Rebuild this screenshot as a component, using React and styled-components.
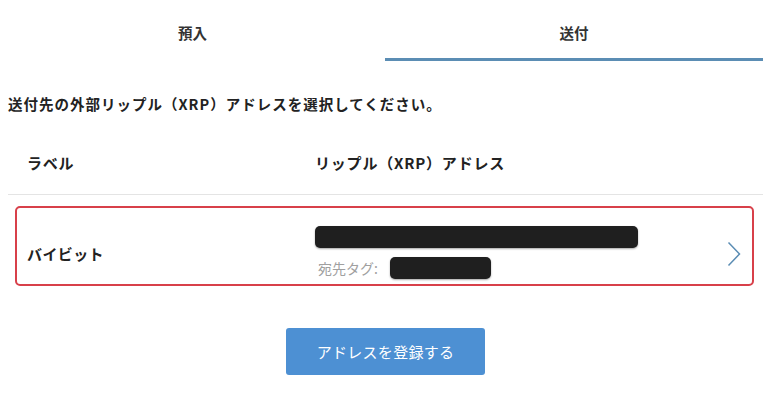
import styled, { createGlobalStyle } from 'styled-components';

const GlobalStyle = createGlobalStyle`
  body {
    margin: 0;
    background: #fff;
    font-family: "Noto Sans CJK JP", "Noto Sans", sans-serif;
    color: #333;
  }
`;

const Page = styled.div`
  width: 768px;
  height: 407px;
  overflow: hidden;
`;

const Tabs = styled.div`
  display: grid;
  grid-template-columns: 385px 378px;
`;

const Tab = styled.div`
  height: 61px;
  padding-top: 23px;
  box-sizing: border-box;
  text-align: center;
  font-size: 14.5px;
  font-weight: 700;
  line-height: 20px;
  color: #333;
  border-bottom: 3px solid ${(props) => (props.active ? '#5b8db4' : 'transparent')};
`;

const Lead = styled.p`
  margin: 33px 0 0 8px;
  font-size: 14.5px;
  font-weight: 700;
  line-height: 20px;
  letter-spacing: 1px;
  color: #222;
`;

const HeadRow = styled.div`
  display: grid;
  grid-template-columns: 307px 1fr;
  margin: 39px 5px 0 8px;
  padding-bottom: 21px;
  border-bottom: 1px solid #e4e4e4;
  font-size: 15px;
  font-weight: 700;
  line-height: 20px;
  letter-spacing: 0.8px;
  color: #222;
`;

const HeadCell = styled.div`
  padding-left: ${(props) => props.pl || 0}px;
`;

const AddressRow = styled.div`
  display: grid;
  grid-template-columns: 288px 1fr 30px;
  align-items: center;
  margin: 11px 14px 0 15px;
  height: 80px;
  box-sizing: border-box;
  padding: 16px 0 0 10px;
  border: 2px solid #d8404a;
  border-radius: 5px;
  cursor: pointer;
`;

const Name = styled.div`
  font-size: 15px;
  font-weight: 700;
  letter-spacing: 0.4px;
  color: #222;
  margin-top: -2px;
`;

const AddressCol = styled.div`
  display: flex;
  flex-direction: column;
  gap: 9px;
  align-self: start;
  margin-top: 2px;
`;

const Masked = styled.div`
  width: ${(props) => props.w}px;
  height: 22px;
  background: #1f1f1f;
  border-radius: 5px;
  box-shadow: 0 1px 2px rgba(0, 0, 0, 0.35);
`;

const TagLine = styled.div`
  display: flex;
  align-items: center;
  padding-left: 3px;
`;

const TagLabel = styled.span`
  font-size: 14px;
  line-height: 20px;
  color: #a0a0a0;
  width: 72px;
`;

const Chevron = styled.div`
  display: flex;
  align-items: center;
  padding-left: 5px;
`;

const ButtonWrap = styled.div`
  display: flex;
  justify-content: center;
  margin-top: 42px;
  padding-left: 3px;
`;

const RegisterButton = styled.button`
  width: 199px;
  height: 47px;
  border: none;
  border-radius: 3px;
  background: #4d90d3;
  color: #fff;
  font-family: inherit;
  font-size: 15px;
  letter-spacing: 0.3px;
  cursor: pointer;
`;

export default function App() {
  return (
    <Page>
      <GlobalStyle />
      <Tabs>
        <Tab>預入</Tab>
        <Tab active>送付</Tab>
      </Tabs>
      <Lead>送付先の外部リップル（XRP）アドレスを選択してください。</Lead>
      <HeadRow>
        <HeadCell pl={19}>ラベル</HeadCell>
        <HeadCell>リップル（XRP）アドレス</HeadCell>
      </HeadRow>
      <AddressRow>
        <Name>バイビット</Name>
        <AddressCol>
          <Masked w={323} />
          <TagLine>
            <TagLabel>宛先タグ:</TagLabel>
            <Masked w={101} />
          </TagLine>
        </AddressCol>
        <Chevron>
          <svg width="14" height="26" viewBox="0 0 14 26">
            <path d="M1.5 1.5 L12.5 13 L1.5 24.5" fill="none" stroke="#5b8db4" strokeWidth="1.5" />
          </svg>
        </Chevron>
      </AddressRow>
      <ButtonWrap>
        <RegisterButton>アドレスを登録する</RegisterButton>
      </ButtonWrap>
    </Page>
  );
}
